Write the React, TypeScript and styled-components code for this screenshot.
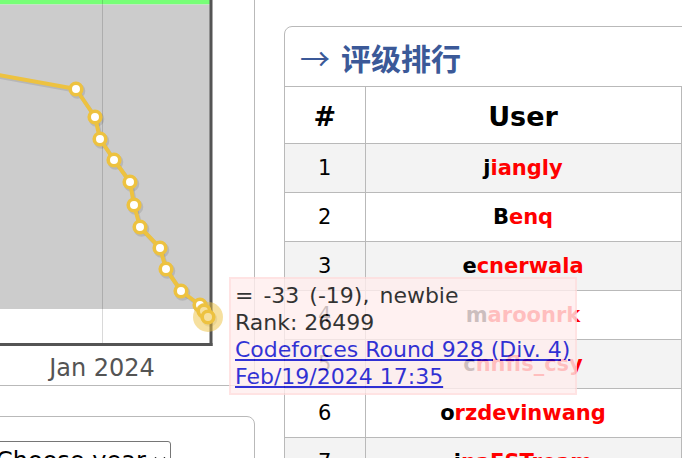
import React from "react";
import styled, { createGlobalStyle } from "styled-components";

const GlobalStyle = createGlobalStyle`
  html, body {
    margin: 0;
    padding: 0;
    background: #fff;
    overflow: hidden;
  }
  body {
    font-family: "DejaVu Sans", Verdana, sans-serif;
  }
`;

const Viewport = styled.div`
  position: relative;
  width: 682px;
  height: 458px;
  overflow: hidden;
`;

// the page is scrolled a little, so the layout starts above and left of the window
const Page = styled.div`
  display: flex;
  align-items: flex-start;
  gap: 29px;
  margin: -60px 0 0 -30px;
`;

const LeftColumn = styled.div`
  display: flex;
  flex-direction: column;
  gap: 30px;
  width: 285px;
  flex-shrink: 0;
`;

const RoundBox = styled.div`
  box-sizing: border-box;
  border: 1px solid #b9b9b9;
  border-radius: 8px;
  background: #fff;
  overflow: hidden;
`;

const ChartSvg = styled.svg`
  display: block;
  margin-left: 20px;
`;

const YearBox = styled(RoundBox)`
  padding: 24px 0 20px 20px;
`;

const SelectWrap = styled.div`
  position: relative;
  width: 180px;
`;

const YearSelect = styled.select`
  appearance: none;
  display: block;
  box-sizing: border-box;
  width: 180px;
  height: 40px;
  font-family: "DejaVu Sans", sans-serif;
  font-size: 24px;
  color: #000;
  background: #fff;
  border: 1px solid #767676;
  border-radius: 3px;
  padding: 0 20px 0 4px;
  margin: 0;
`;

const Chevron = styled.svg`
  position: absolute;
  right: 5px;
  top: 15px;
  pointer-events: none;
`;

const Sidebar = styled(RoundBox)`
  width: 520px;
  margin-top: 86px;
  flex-shrink: 0;
`;

const Caption = styled.div`
  height: 59px;
  display: flex;
  align-items: center;
  gap: 11px;
  padding-left: 15px;
  border-bottom: 1px solid #b9b9b9;
  color: #3b5998;
  font-family: "Noto Sans CJK SC", sans-serif;
  font-size: 30px;
  font-weight: 700;
`;

const Arrow = styled.span`
  font-weight: 400;
`;

const RatingTable = styled.table`
  width: 100%;
  border-collapse: collapse;
  border-style: hidden;
  font-family: "DejaVu Sans", sans-serif;
`;

const HeadCell = styled.th<{ $width?: number }>`
  width: ${(p) => (p.$width ? `${p.$width}px` : "auto")};
  height: 56px;
  padding: 4px 0 0;
  box-sizing: border-box;
  border: 1px solid #b9b9b9;
  font-size: 27px;
  font-weight: 700;
  color: #000;
  text-align: center;
`;

const Row = styled.tr<{ $dark: boolean }>`
  background: ${(p) => (p.$dark ? "#f3f3f3" : "#fff")};
`;

const Cell = styled.td`
  height: 48px;
  padding: 0;
  border: 1px solid #b9b9b9;
  font-size: 21px;
  color: #000;
  text-align: center;
`;

const Handle = styled.span`
  font-weight: 700;
  color: #ff0000;
`;

const FirstLetter = styled.span`
  color: #000;
`;

const Tooltip = styled.div`
  position: absolute;
  left: 229px;
  top: 277px;
  padding: 3px 5px 3px 4px;
  border: 2px solid #fdd;
  background: #fee;
  opacity: 0.8;
  font-family: "DejaVu Sans", sans-serif;
  font-size: 22px;
  line-height: 27px;
  color: #000;
  white-space: nowrap;
`;

const TipLine = styled.span<{ $spaced?: boolean }>`
  word-spacing: ${(p) => (p.$spaced ? "3px" : "normal")};
`;

const TipLink = styled.a`
  color: #0000cc;
  text-decoration: underline;
`;

const users = [
  { rank: 1, handle: "jiangly", rating: 3807 },
  { rank: 2, handle: "Benq", rating: 3783 },
  { rank: 3, handle: "ecnerwala", rating: 3629 },
  { rank: 4, handle: "maroonrk", rating: 3609 },
  { rank: 5, handle: "cnnfls_csy", rating: 3600 },
  { rank: 6, handle: "orzdevinwang", rating: 3597 },
  { rank: 7, handle: "inaFSTream", rating: 3568 },
];

const points: [number, number][] = [
  [76, 89],
  [95, 117],
  [100, 139],
  [114, 160],
  [130, 182],
  [134, 205],
  [140, 227],
  [160, 248],
  [166, 269],
  [181, 291],
  [200, 305],
  [204, 311],
  [208, 317],
];

const SERIES = "#edc240";

const RatingChart: React.FC = () => {
  const linePath =
    "M-40 68 " + points.map(([x, y]) => `L${x} ${y}`).join(" ");
  const [hx, hy] = points[points.length - 1];

  return (
    <ChartSvg width={236} height={444} viewBox="-9 -59 236 444">
      <rect x={-9} y={-59} width={220} height={63.5} fill="#77ff77" />
      <rect x={-9} y={4.5} width={220} height={304.5} fill="#cccccc" />
      <rect x={-9} y={309} width={220} height={34} fill="#ffffff" />
      <line x1={102.5} y1={-59} x2={102.5} y2={343} stroke="rgba(0,0,0,0.15)" strokeWidth={1} />
      <line x1={211} y1={-59} x2={211} y2={346} stroke="#545454" strokeWidth={3} />
      <line x1={-9} y1={344.5} x2={212.5} y2={344.5} stroke="#545454" strokeWidth={3} />

      <g transform="translate(1.5 2)" fill="none" stroke="rgba(0,0,0,0.1)" strokeWidth={4}>
        <path d={linePath} strokeLinejoin="round" />
        {points.map(([x, y], i) => (
          <circle key={i} cx={x} cy={y} r={5.8} />
        ))}
      </g>

      <path d={linePath} fill="none" stroke={SERIES} strokeWidth={4} strokeLinejoin="round" />
      {points.map(([x, y], i) => (
        <circle key={i} cx={x} cy={y} r={5.8} fill="#fff" stroke={SERIES} strokeWidth={3.6} />
      ))}

      <circle cx={hx} cy={hy} r={15} fill="rgba(237,194,64,0.5)" />

      <text
        x={102}
        y={376}
        textAnchor="middle"
        fontFamily="DejaVu Sans, sans-serif"
        fontSize={24}
        fill="#545454"
      >
        Jan 2024
      </text>
    </ChartSvg>
  );
};

const App: React.FC = () => {
  return (
    <Viewport>
      <GlobalStyle />
      <Page>
        <LeftColumn>
          <RoundBox>
            <RatingChart />
          </RoundBox>
          <YearBox>
            <SelectWrap>
              <YearSelect defaultValue="">
                <option value="">Choose year</option>
                <option value="2024">2024</option>
                <option value="2023">2023</option>
              </YearSelect>
              <Chevron width={12} height={8} viewBox="0 0 12 8">
                <path d="M1 1.5 L6 6.5 L11 1.5" fill="none" stroke="#000" strokeWidth={1.6} />
              </Chevron>
            </SelectWrap>
          </YearBox>
        </LeftColumn>

        <Sidebar>
          <Caption>
            <Arrow>→</Arrow>
            <span>评级排行</span>
          </Caption>
          <RatingTable>
            <thead>
              <tr>
                <HeadCell $width={80}>#</HeadCell>
                <HeadCell $width={316}>User</HeadCell>
                <HeadCell>Rating</HeadCell>
              </tr>
            </thead>
            <tbody>
              {users.map((u) => (
                <Row key={u.rank} $dark={u.rank % 2 === 1}>
                  <Cell>{u.rank}</Cell>
                  <Cell>
                    <Handle>
                      <FirstLetter>{u.handle[0]}</FirstLetter>
                      {u.handle.slice(1)}
                    </Handle>
                  </Cell>
                  <Cell>{u.rating}</Cell>
                </Row>
              ))}
            </tbody>
          </RatingTable>
        </Sidebar>
      </Page>

      <Tooltip>
        <TipLine $spaced>= -33 (-19), newbie</TipLine>
        <br />
        <TipLine>Rank: 26499</TipLine>
        <br />
        <TipLink href="#">Codeforces Round 928 (Div. 4)</TipLink>
        <br />
        <TipLink href="#">Feb/19/2024 17:35</TipLink>
      </Tooltip>
    </Viewport>
  );
};

export default App;
